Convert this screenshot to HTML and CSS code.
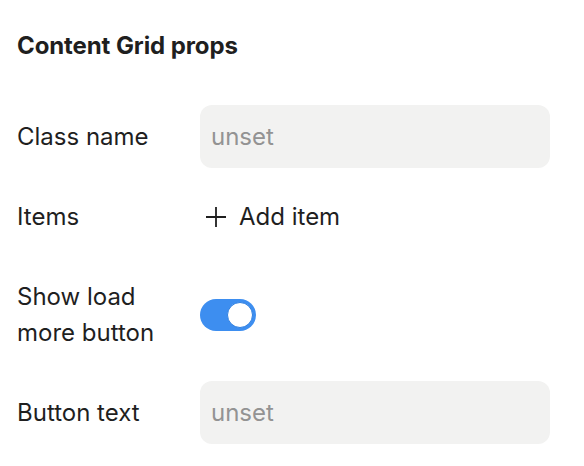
FILE: index.html
```html
<!DOCTYPE html>
<html>
<head>
<meta charset="utf-8">
<link rel="stylesheet" href="styles.css">
</head>
<body>
<div class="panel">
  <h2 class="title">Content Grid props</h2>
  <div class="rows">
    <div class="row">
      <div class="label">Class name</div>
      <div class="field"><div class="input">unset</div></div>
    </div>
    <div class="row">
      <div class="label">Items</div>
      <div class="field">
        <div class="add">
          <svg class="plus" width="22" height="22" viewBox="0 0 22 22"><path d="M11 1v20M1 11h20" stroke="#1f1f1f" stroke-width="1.8" fill="none"/></svg>
          <span>Add item</span>
        </div>
      </div>
    </div>
    <div class="row tall">
      <div class="label">Show load<br>more button</div>
      <div class="field"><div class="toggle"><div class="knob"></div></div></div>
    </div>
    <div class="row">
      <div class="label">Button text</div>
      <div class="field"><div class="input">unset</div></div>
    </div>
  </div>
</div>
</body>
</html>
```
FILE: styles.css
```css
html, body { margin: 0; padding: 0; background: #fff; }
body { font-family: Inter, "Noto Sans", sans-serif; color: #1f1f1f; }
.panel { padding: 26px 34px 0 17px; }
.title { margin: 0; font-size: 24px; font-weight: 700; line-height: 40px; letter-spacing: -0.1px; }
.rows { display: flex; flex-direction: column; gap: 17px; margin-top: 39px; }
.row { display: grid; grid-template-columns: 183px 1fr; align-items: center; min-height: 63px; }
.row.tall { min-height: 99px; }
.label { font-size: 24px; line-height: 36px; }
.input { height: 63px; box-sizing: border-box; background: #f2f2f1; border-radius: 12px; padding: 0 11px; display: flex; align-items: center; font-size: 24px; color: #939393; }
.add { display: flex; align-items: center; gap: 12px; padding-left: 5px; font-size: 24px; }
.plus { display: block; }
.toggle { width: 56px; height: 32px; border-radius: 16px; background: #3d8ef0; position: relative; }
.knob { position: absolute; right: 3px; top: 3px; width: 26px; height: 26px; border-radius: 50%; background: #fff; box-sizing: border-box; border: 1.5px solid #2f7fe0; }
```
